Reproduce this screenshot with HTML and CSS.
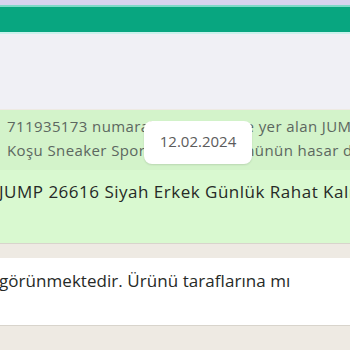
FILE: index.html
```html
<!DOCTYPE html>
<html lang="tr">
<head>
<meta charset="utf-8">
<link rel="stylesheet" href="styles.css">
</head>
<body>
<div class="page">
  <div class="top-strip"></div>
  <div class="line-cyan"></div>
  <div class="app-bar"></div>
  <div class="line-light"></div>
  <div class="grey-area"></div>
  <div class="chat">
    <div class="bubble out">
      <div class="quote">
        <div class="q-line">711935173 numaralı siparişinizde yer alan JUMP 26616 Siyah Erkek Günlük Rahat Kalıp</div>
        <div class="q-line">Koşu Sneaker Spor Ayakkabı ürününün hasar durumu</div>
      </div>
      <div class="msg-line">JUMP 26616 Siyah Erkek Günlük Rahat Kalıp Koşu Sneaker</div>
    </div>
    <div class="bubble in">
      <div class="msg-line">görünmektedir. Ürünü taraflarına mı</div>
    </div>
    <div class="date-badge">12.02.2024</div>
  </div>
</div>
</body>
</html>
```
FILE: styles.css
```css
html, body {
  margin: 0;
  padding: 0;
  overflow: hidden;
  width: 350px;
  height: 350px;
}
.page {
  width: 350px;
  height: 350px;
  overflow: hidden;
  font-family: "Open Sans", "Noto Sans", sans-serif;
  background: #eeeae3;
}
.top-strip { height: 5px; background: #d7d3ef; }
.line-cyan { height: 2px; background: #7fd9c9; }
.app-bar { height: 25px; background: #08a680; }
.line-light { height: 2px; background: #c9f2ec; }
.grey-area { height: 75px; background: #f0f0f5; }
.chat {
  position: relative;
  background: #eeeae3;
  padding-top: 1px;
  height: 240px;
}
.bubble {
  white-space: nowrap;
  overflow: hidden;
  box-shadow: 0 1px 0 #d8d4cc;
}
.bubble.out {
  background: #d9f9d0;
  height: 133px;
  margin-bottom: 15px;
}
.quote {
  background: #d3f3ca;
  padding: 4px 0 0 7px;
  height: 56px;
}
.q-line {
  font-size: 15px;
  line-height: 24px;
  letter-spacing: 0.4px;
  color: #5c6760;
}
.bubble.out .msg-line {
  padding-top: 10px;
  margin-left: -1px;
  font-size: 17px;
  line-height: 24px;
  letter-spacing: 0.5px;
  color: #262a27;
}
.bubble.in {
  background: #ffffff;
  height: 67px;
  padding-top: 11px;
  box-sizing: border-box;
}
.bubble.in .msg-line {
  font-size: 17px;
  line-height: 24px;
  letter-spacing: 0.05px;
  color: #262a27;
  margin-left: -1px;
}
.date-badge {
  position: absolute;
  left: 144px;
  top: 12px;
  width: 108px;
  height: 43px;
  box-sizing: border-box;
  background: #ffffff;
  border-radius: 8px;
  box-shadow: 0 1px 2px rgba(0,0,0,0.12);
  font-size: 15px;
  color: #5b5b5b;
  text-align: center;
  line-height: 40px;
}
```
